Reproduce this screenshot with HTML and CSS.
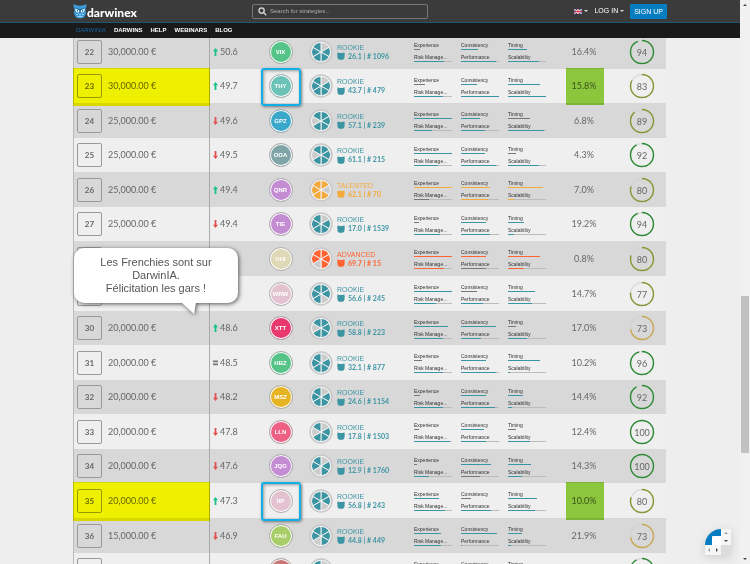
FILE: index.html
```html
<!DOCTYPE html>
<html lang="en">
<head>
<meta charset="utf-8">
<title>Darwinex - DarwinIA</title>
<link rel="stylesheet" href="styles.css">
</head>
<body>
<svg class="defs" aria-hidden="true">
  <symbol id="owl" viewBox="0 0 9 9"><path d="M0.6 0.3 2.6 1.2H6.4L8.4 0.3V1.9L9 2.6 8.5 3.3V5.5C8.5 7.6 7 8.8 4.5 8.8S.5 7.6.5 5.5V3.3L0 2.6.6 1.9Z"/></symbol>
  <symbol id="up" viewBox="0 0 5 8"><path d="M2.5 0 5 3.2H3.4V8H1.6V3.2H0Z"/></symbol>
  <symbol id="down" viewBox="0 0 5 8"><path d="M2.5 8 5 4.8H3.4V0H1.6V4.8H0Z"/></symbol>
  <symbol id="same" viewBox="0 0 5 8"><path d="M0 1.5H5V3.3H0ZM0 4.5H5V6.3H0Z"/></symbol>
</svg>

<div class="page">
  <header class="top">
    <div class="bar">
      <a class="logo" href="#">
        <svg viewBox="0 0 14 15" width="14" height="15" aria-hidden="true">
          <path fill="#3d9bdb" d="M.6.3C2.5.8 4.2 1.8 7 1.8S11.500.8 13.400.3C13.800 1.800 13.300 3.300 12.600 4.300V8C13.400 8 13.300 9.600 12.600 10 12 13 10 14.600 7 14.600S2 13 1.400 10C.7 9.600.6 8 1.400 8V4.300C.7 3.300.2 1.800.6.3Z"/>
          <path fill="#f1f7fb" d="M2.300 4.700 6.300 6.200 5.900 8.300C4.300 8.900 2.600 8 2.300 4.700ZM11.700 4.700 7.700 6.200 8.100 8.300C9.700 8.900 11.400 8 11.700 4.700Z"/>
          <path fill="#1b4f79" d="M2 3.600 7 5.500 12 3.600 7.400 6.400 7 9.500 6.600 6.400ZM4 6.200H5V7.400H4ZM9 6.200H10V7.400H9Z"/>
          <path fill="#9fd0f1" d="M3 10H5V11H3ZM6 10H8V11H6ZM9 10H11V11H9ZM4.500 12H9.500V13H4.500Z"/>
        </svg>
        <span>darwinex</span>
      </a>
      <label class="search">
        <svg viewBox="0 0 9 9" width="9" height="9" aria-hidden="true"><circle cx="3.600" cy="3.600" r="2.600"/><path d="M5.500 5.500 8.300 8.300"/></svg>
        <input type="search" placeholder="Search for strategies..." aria-label="Search for strategies">
      </label>
      <div class="account">
        <button class="drop" aria-label="Language">
          <svg viewBox="0 0 8 5" width="8" height="5" aria-hidden="true"><path fill="#35437e" d="M0 0H8V5H0Z"/><path stroke="#f3dfe4" d="M0 0 8 5M8 0 0 5"/><path fill="#fff" d="M3 0H5V5H3ZM0 1.700H8V3.300H0Z"/><path fill="#d8344a" d="M3.500 0H4.500V5H3.500ZM0 2H8V3H0Z"/></svg>
          <i class="caret"></i>
        </button>
        <button class="drop">LOG IN <i class="caret"></i></button>
        <a class="signup" href="#">SIGN UP</a>
      </div>
    </div>
    <nav class="menu">
      <a class="on" href="#">DARWINIA</a>
      <a href="#">DARWINS</a>
      <a href="#">HELP</a>
      <a href="#">WEBINARS</a>
      <a href="#">BLOG</a>
    </nav>
  </header>

  <main class="board">
    <table class="ranking">
      <colgroup><col class="c-prize"><col class="c-score"><col class="c-badge"><col class="c-level"><col class="c-skills"><col class="c-return"><col class="c-gauge"></colgroup>
      <tbody id="rows"></tbody>
    </table>
    <aside class="bubble">Les Frenchies sont sur DarwinIA.<br>Félicitation les gars !
      <svg viewBox="0 0 16 12" width="16" height="12" aria-hidden="true"><path d="M0 0 12 11 14 0Z"/></svg>
    </aside>
  </main>
</div>

<div class="scroll" aria-hidden="true"><i class="tri up"></i><i class="thumb"></i><i class="tri down"></i></div>

<div class="chat" aria-hidden="true">
  <div class="chat-view"><i></i></div>
  <div class="chat-v"><i class="tri up faint"></i><i class="tri down"></i></div>
  <div class="chat-h"><i class="tri left faint"></i><i class="tri right"></i></div>
  <div class="chat-corner"></div>
</div>
<script src="app.js"></script>
</body>
</html>
```
FILE: styles.css
```css
* { box-sizing: border-box; }
html, body { height: 100%; }
body {
  margin: 0;
  display: flex;
  overflow: hidden;
  background: #eee;
  color: #666;
  font: 10px/12px "Liberation Sans", Arial, sans-serif;
}
a { color: inherit; text-decoration: none; }
button { border: 0; padding: 0; background: none; color: inherit; font: inherit; }
.defs { position: absolute; width: 0; height: 0; }

.page { flex: 1; min-width: 0; position: relative; }

/* header */
.top { position: absolute; z-index: 5; top: 0; left: 0; right: 0; color: #fff; }
.bar {
  display: flex;
  align-items: center;
  height: 23px;
  padding: 0 73px;
  background: #3b3b3b;
  border-bottom: 1px solid #1b5877;
}
.logo { display: flex; align-items: center; width: 179px; }
.logo span { font: 900 12px/16px Lato, sans-serif; padding-top: 4px; }
.search {
  display: flex;
  align-items: center;
  gap: 3px;
  width: 176px;
  height: 15px;
  padding: 0 5px;
  border: 1px solid #777;
  border-radius: 2px;
}
.search svg { fill: none; stroke: #ccc; stroke-width: 1.5; flex: none; }
.search input {
  flex: 1;
  min-width: 0;
  padding: 0;
  border: 0;
  outline: 0;
  background: none;
  color: #ddd;
  font: 6px/10px "Liberation Sans", sans-serif;
}
.search input::placeholder { color: #aaa; opacity: 1; }
.account { display: flex; align-items: center; gap: 6px; margin-left: auto; font: 7px/10px "Liberation Sans", sans-serif; }
.drop { display: flex; align-items: center; gap: 2px; }
.caret { border: 2px solid transparent; border-top-color: #ddd; border-bottom: 0; }
.signup { padding: 3px 4px 2px; border-radius: 1px; background: #067cc1; line-height: 10px; }
.menu {
  display: flex;
  gap: 8px;
  height: 15px;
  padding: 0 76px;
  background: #1a1a1a;
  font: bold 6px/14px "Liberation Sans", sans-serif;
}
.menu .on { color: #1565a5; font-weight: normal; }

/* ranking */
.board { position: relative; margin: 34px 74px 0 73px; }
.ranking { width: 100%; border-spacing: 0; table-layout: fixed; font: 9px/12px Lato, sans-serif; }
.c-prize { width: 137px; }
.c-score { width: 50px; }
.c-badge { width: 41px; }
.c-level { width: 112px; }
.c-skills { width: 142px; }
.c-return { width: 58px; }
.ranking tr { height: 35px; background: #efefef; }
.ranking tr:nth-child(7n+2), .ranking tr:nth-child(7n+4), .ranking tr:nth-child(7n+6) { height: 34px; }
.ranking tr:nth-child(odd) { background: #d8d8d8; }
.ranking td { position: relative; padding: 0; vertical-align: middle; }
.prize { border-left: 1px solid #bbb; border-right: 1px solid #aaa; }
.prize div { display: flex; align-items: center; gap: 6px; padding-left: 3px; }
.rank {
  width: 25px;
  height: 24px;
  border: 1px solid #999;
  border-radius: 2px;
  text-align: center;
  font: bold 8px/22px Lato, sans-serif;
}
.score div { display: flex; align-items: center; gap: 2px; padding-left: 3px; }
.score svg { width: 5px; height: 8px; fill: #e05252; }
.score .up { fill: #15c28a; }
.score .same { fill: #777; }
.disc {
  display: block;
  width: 24px;
  height: 24px;
  margin: 0 auto;
  border: 1px solid #b0b0b0;
  border-radius: 50%;
  box-shadow: inset 0 0 0 1px #fff;
  color: #fff;
  text-align: center;
  font: bold 6px/22px "Liberation Sans", sans-serif;
}
.level div { display: flex; align-items: center; gap: 4px; padding-left: 8px; }
.wheel { flex: none; }
.level p { margin: 0; font: 7px/9px "Liberation Sans", sans-serif; }
.level p + p { display: flex; align-items: center; gap: 3px; font: bold 7px/9px Lato, sans-serif; }
.level .owl { width: 8px; height: 8px; fill: currentColor; }
.rookie { color: #3c95a3; }
.talented { color: #f3aa3c; }
.advanced { color: #ff6432; }
.skills ul {
  display: grid;
  grid-template-columns: repeat(3, 38px);
  gap: 4px 9px;
  margin: 0;
  padding: 1px 0 0 1px;
  list-style: none;
  font: 5px/7px "Liberation Sans", sans-serif;
}
.skills li { height: 8px; }
.skills span { display: block; color: #333; }
.track { display: block; height: 1px; background: #bbb; }
.track.bare { background: none; }
.track i { display: block; height: 1px; background: currentColor; }
.track .low { background: #777; }
.return { text-align: center; }
.gauge svg { display: block; margin-left: 16px; }
.gauge text { font: 9px Lato, sans-serif; fill: #666; text-anchor: middle; }

/* annotations over the ranking */
.marked .prize::after, .marked .return::after {
  content: "";
  position: absolute;
  z-index: 1;
  mix-blend-mode: multiply;
}
.marked .prize::after { inset: -1px -1px -3px; background: #ffff00; }
.marked .return::after { inset: -1px 9px -2px 11px; background: #95d441; }
.marked .badge::after {
  content: "";
  position: absolute;
  z-index: 2;
  inset: -1px 0 -3px 1px;
  border: 2px solid #12aee6;
  border-radius: 3px;
  box-shadow: 1px 1px 3px #777, inset 1px 1px 3px #999;
}
.bubble {
  position: absolute;
  z-index: 3;
  left: 1px;
  top: 214px;
  width: 164px;
  padding: 8px 20px;
  border-radius: 10px;
  background: #fff;
  color: #555;
  text-align: center;
  font: 11px/13px "Liberation Sans", sans-serif;
  filter: drop-shadow(1px 1px 2px #555);
}
.bubble svg { position: absolute; left: 108px; top: 100%; fill: #fff; }

/* scrollbars */
.scroll { display: flex; flex-direction: column; align-items: center; width: 10px; padding: 4px 1px; background: #f1f1f1; }
.thumb { width: 8px; height: 157px; margin: auto 0 105px; background: #c1c1c1; }
.tri { border: 2px solid transparent; }
.tri.up { border-bottom-color: #444; border-top: 0; }
.tri.down { border-top-color: #444; border-bottom: 0; }
.tri.left { border-right-color: #444; border-left: 0; }
.tri.right { border-left-color: #444; border-right: 0; }
.tri.faint { opacity: .5; }
.chat {
  position: fixed;
  z-index: 6;
  right: 19px;
  bottom: 9px;
  display: grid;
  grid-template: 16px 10px / 16px 10px;
  box-shadow: 0 2px 8px #ccc;
  border-top-left-radius: 16px;
}
.chat-view { overflow: hidden; border-top-left-radius: 16px; background: #067cc1; }
.chat-view i { display: block; width: 9px; height: 9px; margin: 7px 0 0 7px; background: #fff; border-radius: 1px 0 0; }
.chat-v, .chat-h { display: flex; align-items: center; justify-content: space-around; background: #f6f6f6; }
.chat-v { flex-direction: column; }
.chat-corner { background: #dcdcdc; }
```
FILE: app.js
```js
const SKILLS = ["Experience", "Consistency", "Timing", "Risk Manage...", "Performance", "Scalability"];

// index in SKILLS of each wheel slice, clockwise from the top
const SLICE_SKILL = [0, 3, 1, 4, 2, 5];

// rank, prize, trend, score, code, disc colour, level, rating, place, skill bars (negative = low), return, gauge
const ROWS = [
  [22, "30,000.00 €", "up", "50.6", "VIX", "#56c488", "rookie", "26.1", 1096, [-16, 46, 49, 79, 92, 82], "16.4%", 94],
  [23, "30,000.00 €", "up", "49.7", "THY", "#6bc3b8", "rookie", "43.7", 479, [-29, 43, 83, 76, 100, 100], "15.8%", 83],
  [24, "25,000.00 €", "down", "49.6", "GPZ", "#3aa8c9", "rookie", "57.1", 239, [100, 51, -57, 47, 62, 95], "6.8%", 89],
  [25, "25,000.00 €", "down", "49.5", "OOA", "#7fa5a8", "rookie", "61.1", 215, [100, 62, -20, 64, 91, 82], "4.3%", 92],
  [26, "25,000.00 €", "up", "49.4", "QNR", "#c48cd3", "talented", "62.1", 70, [100, 76, 91, -40, 72, 15], "7.0%", 80],
  [27, "25,000.00 €", "down", "49.4", "TIE", "#c48cd3", "rookie", "17.0", 1539, [-12, 67, 42, 68, 76, 15], "19.2%", 94],
  ["", "", "", "", "UHI", "#e0d9b8", "advanced", "69.7", 15, [100, 65, 85, 79, -65, 41], "0.8%", 80],
  ["", "", "", "", "WRW", "#e3c3d0", "rookie", "56.6", 245, [100, -43, 72, 57, 57, 63], "14.7%", 77],
  [30, "20,000.00 €", "up", "48.6", "XTT", "#e8386e", "rookie", "58.8", 223, [90, 91, -20, 77, 53, 50], "17.0%", 73],
  [31, "20,000.00 €", "same", "48.5", "HBZ", "#56c488", "rookie", "32.1", 877, [-20, 65, 85, 77, 93, 5], "10.2%", 96],
  [32, "20,000.00 €", "down", "48.2", "MSZ", "#e6b422", "rookie", "24.6", 1154, [-16, 65, 40, 75, 90, 11], "14.4%", 92],
  [33, "20,000.00 €", "down", "47.8", "LLN", "#ee5f84", "rookie", "17.8", 1503, [-12, 61, -20, 96, 66, 57], "12.4%", 100],
  [34, "20,000.00 €", "down", "47.6", "JQG", "#c48cd3", "rookie", "12.9", 1760, [-9, 78, 61, 40, -50, 37], "14.3%", 100],
  [35, "20,000.00 €", "up", "47.3", "IIP", "#e3c3d0", "rookie", "56.8", 243, [66, -27, 77, 82, 78, 71], "10.0%", 80],
  [36, "15,000.00 €", "down", "46.9", "FAU", "#a9ce69", "rookie", "44.8", 449, [72, 95, 36, 71, -3, 7], "21.9%", 73],
  ["", "", "", "", "", "#c87878", "rookie", "", "", [-20, 70, 40, 70, 60, 50], "", 92]
];
const MARKED = [23, 35];

const point = (deg, r) => {
  const a = (deg - 90) * Math.PI / 180;
  return `${(12 + r * Math.cos(a)).toFixed(2)} ${(12 + r * Math.sin(a)).toFixed(2)}`;
};

function wheel(bars) {
  const slices = SLICE_SKILL.map((skill, i) => {
    const fill = bars[skill] < 0 ? "#ccc" : "currentColor";
    return `<path fill="${fill}" stroke="#f2f2f2" d="M12 12L${point(i * 60, 9.5)}A9.5 9.5 0 0 1 ${point(i * 60 + 60, 9.5)}Z"/>`;
  }).join("");
  return `<svg class="wheel" viewBox="0 0 24 24" width="24" height="24" aria-hidden="true"><circle cx="12" cy="12" r="11" fill="#f2f2f2" stroke="#c8c8c8" stroke-width="1.5"/>${slices}</svg>`;
}

function gauge(n) {
  const color = n > 90 ? "#2d8a34" : n > 75 ? "#879632" : "#c9a955";
  return `<svg viewBox="0 0 26 26" width="26" height="26"><g fill="none" transform="rotate(-90 13 13)"><circle cx="13" cy="13" r="11.5" stroke="#d0d0d0"/><circle cx="13" cy="13" r="11.5" stroke="${color}" stroke-width="1.4" pathLength="100" stroke-dasharray="${n} 100"/></g><text x="13" y="17">${n}</text></svg>`;
}

function skill(name, value, i) {
  const low = value < 0 ? "low" : "";
  const bare = i < 3 ? "bare" : "";
  return `<li><span>${name}</span><b class="track ${bare}"><i class="${low}" style="width:${Math.abs(value)}%"></i></b></li>`;
}

document.getElementById("rows").innerHTML = ROWS.map(
  ([rank, prize, trend, score, code, disc, level, rating, place, bars, ret, quality]) => `
  <tr class="${MARKED.includes(rank) ? "marked" : ""}">
    <td class="prize"><div><span class="rank">${rank}</span>${prize}</div></td>
    <td class="score"><div>${trend && `<svg class="${trend}" aria-hidden="true"><use href="#${trend}"/></svg>`}${score}</div></td>
    <td class="badge"><span class="disc" style="background:${disc}">${code}</span></td>
    <td class="level ${level}"><div>${wheel(bars)}${rating && `<section><p>${level.toUpperCase()}</p><p><svg class="owl" aria-hidden="true"><use href="#owl"/></svg>${rating} | # ${place}</p></section>`}</div></td>
    <td class="skills ${level}"><ul>${SKILLS.map((s, i) => skill(s, bars[i], i)).join("")}</ul></td>
    <td class="return">${ret}</td>
    <td class="gauge">${gauge(quality)}</td>
  </tr>`).join("");
```
